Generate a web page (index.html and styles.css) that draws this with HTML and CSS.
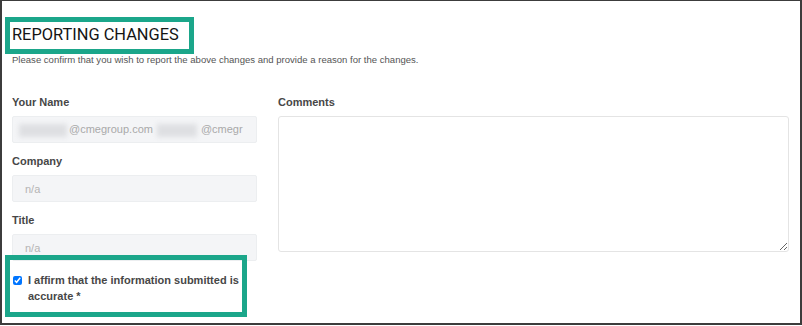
FILE: index.html
```html
<!DOCTYPE html>
<html lang="en">
<head>
    <meta charset="UTF-8">
    <meta name="viewport" content="width=device-width, initial-scale=1.0">
    <title>Reporting Changes</title>
    <link rel="stylesheet" href="styles.css">
</head>
<body>
    <div class="frame">
        <h1 class="title">REPORTING CHANGES</h1>
        <p class="intro">Please confirm that you wish to report the above changes and provide a reason for the changes.</p>

        <form class="report">
            <div class="col-left">
                <div class="field">
                    <label class="field-label">Your Name</label>
                    <div class="input input-name">
                        <span class="smudge smudge-a"></span>@cmegroup.com<span class="smudge smudge-b"></span>@cmegr
                    </div>
                </div>

                <div class="field">
                    <label class="field-label" for="company">Company</label>
                    <input class="input" type="text" id="company" placeholder="n/a" readonly>
                </div>

                <div class="field">
                    <label class="field-label" for="job_title">Title</label>
                    <input class="input" type="text" id="job_title" placeholder="n/a" readonly>
                </div>

                <label class="affirm">
                    <input type="checkbox" checked>
                    <span>I affirm that the information submitted is accurate *</span>
                </label>
            </div>

            <div class="col-right">
                <label class="field-label" for="comments">Comments</label>
                <textarea id="comments" class="comments"></textarea>
            </div>
        </form>

        <!-- highlight boxes drawn over the form -->
        <div class="mark mark-title"></div>
        <div class="mark mark-affirm"></div>
    </div>
</body>
</html>
```

FILE: styles.css
```css
body {
    margin: 0;
    background: #fff;
    font-family: "Liberation Sans", Arial, sans-serif;
}
.frame {
    position: relative;
    box-sizing: border-box;
    width: 802px;
    height: 325px;
    border-top: 1px solid #3c3c3c;
    border-left: 2px solid #3c3c3c;
    border-right: 2px solid #3c3c3c;
    border-bottom: 2px solid #3c3c3c;
    padding: 0 11px 0 10px;
    overflow: hidden;
}
.title {
    margin: 24px 0 0;
    font-family: Roboto, sans-serif;
    font-weight: 400;
    font-size: 16.4px;
    line-height: 20px;
    color: #141414;
}
.intro {
    margin: 9px 0 0;
    font-size: 9.55px;
    line-height: 12px;
    color: #555;
}
.report {
    display: grid;
    grid-template-columns: 245px 1fr;
    column-gap: 21px;
    margin-top: 29px;
}
.field {
    margin-bottom: 11px;
}
.field-label {
    display: block;
    margin-bottom: 7px;
    font-size: 11px;
    font-weight: 700;
    line-height: 14px;
    color: #474747;
}
.input {
    display: block;
    box-sizing: border-box;
    width: 100%;
    height: 27px;
    margin: 0;
    padding: 0 12px;
    border: 1px solid #eceef0;
    border-radius: 2px;
    background: #f4f5f7;
    font-family: "Liberation Sans", Arial, sans-serif;
    font-size: 11px;
    line-height: 25px;
    color: #a9a9a9;
    outline: none;
}
.input::placeholder {
    color: #b4b4b4;
}
.input-name {
    white-space: nowrap;
    overflow: hidden;
    padding-left: 4px;
}
.smudge {
    display: inline-block;
    vertical-align: middle;
    height: 13px;
    background: #dedfe2;
    filter: blur(2.5px);
}
.smudge-a {
    width: 48px;
    margin: 0 2px 0 2px;
}
.smudge-b {
    width: 40px;
    margin: 0 4px 0 4px;
}
.affirm {
    display: flex;
    align-items: flex-start;
    margin-top: 10px;
    font-size: 11px;
    font-weight: 700;
    line-height: 16px;
    color: #474747;
}
.affirm input {
    width: 9px;
    height: 9px;
    margin: 4px 6px 0 1px;
    flex: none;
}
.comments {
    display: block;
    box-sizing: border-box;
    width: 100%;
    height: 136px;
    margin: 0;
    border: 1px solid #e4e4e4;
    border-radius: 3px;
    background: #fff;
}
.mark {
    position: absolute;
    box-sizing: border-box;
    border: 5px solid #1ba68a;
}
.mark-title {
    left: 3px;
    top: 16px;
    width: 189px;
    height: 37px;
}
.mark-affirm {
    left: 3px;
    top: 254px;
    width: 242px;
    height: 62px;
}
```
